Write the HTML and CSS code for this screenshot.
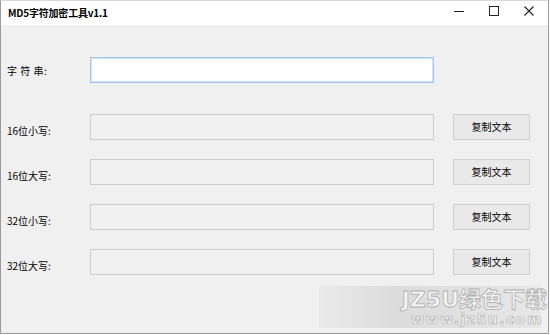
FILE: index.html
```html
<!DOCTYPE html>
<html>
<head>
<meta charset="utf-8">
<link rel="stylesheet" href="styles.css">
</head>
<body>
<div class="window">
  <div class="titlebar">
    <div class="title">MD5字符加密工具v1.1</div>
    <div class="controls">
      <span class="ctl"><svg width="10" height="10" viewBox="0 0 10 10"><line x1="0" y1="5.5" x2="10" y2="5.5" stroke="#222" stroke-width="1"/></svg></span>
      <span class="ctl"><svg width="10" height="10" viewBox="0 0 10 10"><rect x="0.5" y="0.5" width="9" height="9" fill="none" stroke="#222" stroke-width="1"/></svg></span>
      <span class="ctl"><svg width="10" height="10" viewBox="0 0 10 10"><path d="M0.5 0.5 L9.5 9.5 M9.5 0.5 L0.5 9.5" stroke="#222" stroke-width="1.1"/></svg></span>
    </div>
  </div>
  <div class="content">
    <div class="row first">
      <div class="label top">字 符 串:</div>
      <div class="input active"></div>
    </div>
    <div class="rows">
      <div class="row">
        <div class="label">16位小写:</div>
        <div class="input"></div>
        <div class="btn">复制文本</div>
      </div>
      <div class="row">
        <div class="label">16位大写:</div>
        <div class="input"></div>
        <div class="btn">复制文本</div>
      </div>
      <div class="row">
        <div class="label">32位小写:</div>
        <div class="input"></div>
        <div class="btn">复制文本</div>
      </div>
      <div class="row">
        <div class="label">32位大写:</div>
        <div class="input"></div>
        <div class="btn">复制文本</div>
      </div>
    </div>
  </div>
  <div class="watermark">
    <div class="wm-big">JZ5U绿色下载</div>
    <div class="wm-small">www.jz5u.com</div>
  </div>
</div>
</body>
</html>
```
FILE: styles.css
```css
html, body {
  margin: 0;
  padding: 0;
  background: #ffffff;
}
body {
  font-family: "Noto Sans CJK SC", "Liberation Sans", sans-serif;
  color: #000;
}
.window {
  position: relative;
  width: 549px;
  height: 334px;
  box-sizing: border-box;
  border: 1px solid #9a9a9a;
  border-top-color: #d8d8d8;
  background: #f0f0f0;
  display: flex;
  flex-direction: column;
  overflow: hidden;
}
.titlebar {
  height: 24px;
  background: #ffffff;
  display: flex;
  align-items: center;
  justify-content: space-between;
}
.title {
  font-weight: bold;
  font-size: 10px;
  padding-left: 7px;
  letter-spacing: -0.2px;
  padding-bottom: 2px;
}
.controls {
  display: flex;
  align-items: center;
  padding-right: 14px;
  gap: 25px;
  padding-bottom: 5px;
}
.ctl {
  display: flex;
  width: 10px;
  height: 10px;
}
.content {
  padding: 32px 0 0 6px;
  display: flex;
  flex-direction: column;
}
.rows {
  margin-top: 31px;
  display: flex;
  flex-direction: column;
  gap: 19px;
}
.row {
  display: flex;
  align-items: center;
  height: 26px;
}
.label {
  width: 83px;
  font-size: 10px;
  padding-top: 6px;
  white-space: pre;
}
.label.top {
  padding-top: 0;
  letter-spacing: 0.5px;
}
.input {
  width: 344px;
  height: 26px;
  box-sizing: border-box;
  border: 1px solid #cdcdcd;
  background: #f0f0f0;
}
.input.active {
  border: 1px solid #a2c6ec;
  box-shadow: inset 0 0 0 1px #d4e5f7;
  background: #ffffff;
}
.btn {
  margin-left: 19px;
  width: 77px;
  height: 26px;
  box-sizing: border-box;
  border: 1px solid #d0d0d0;
  background: #e9e9e9;
  font-size: 10px;
  display: flex;
  align-items: center;
  justify-content: center;
  padding-bottom: 1px;
}
.watermark {
  position: absolute;
  left: 318px;
  top: 285px;
  width: 222px;
  height: 42px;
  background: linear-gradient(90deg, rgba(200,200,200,0.15) 0%, rgba(195,195,195,0.45) 35%, rgba(215,215,215,0.35) 100%);
  display: flex;
  flex-direction: column;
  align-items: flex-end;
  justify-content: center;
  line-height: 1;
}
.wm-big {
  font-family: "DejaVu Sans", "Noto Sans CJK SC", sans-serif;
  font-weight: bold;
  font-size: 22px;
  line-height: 23px;
  color: #f4f4f4;
  -webkit-text-stroke: 0.8px #b0b0b0;
  margin-right: -6px;
}
.wm-small {
  font-family: "DejaVu Sans", sans-serif;
  font-weight: bold;
  font-size: 14px;
  line-height: 15px;
  letter-spacing: 1.5px;
  color: #f4f4f4;
  -webkit-text-stroke: 0.7px #b0b0b0;
  margin-right: -2px;
  margin-top: 1px;
}
```
